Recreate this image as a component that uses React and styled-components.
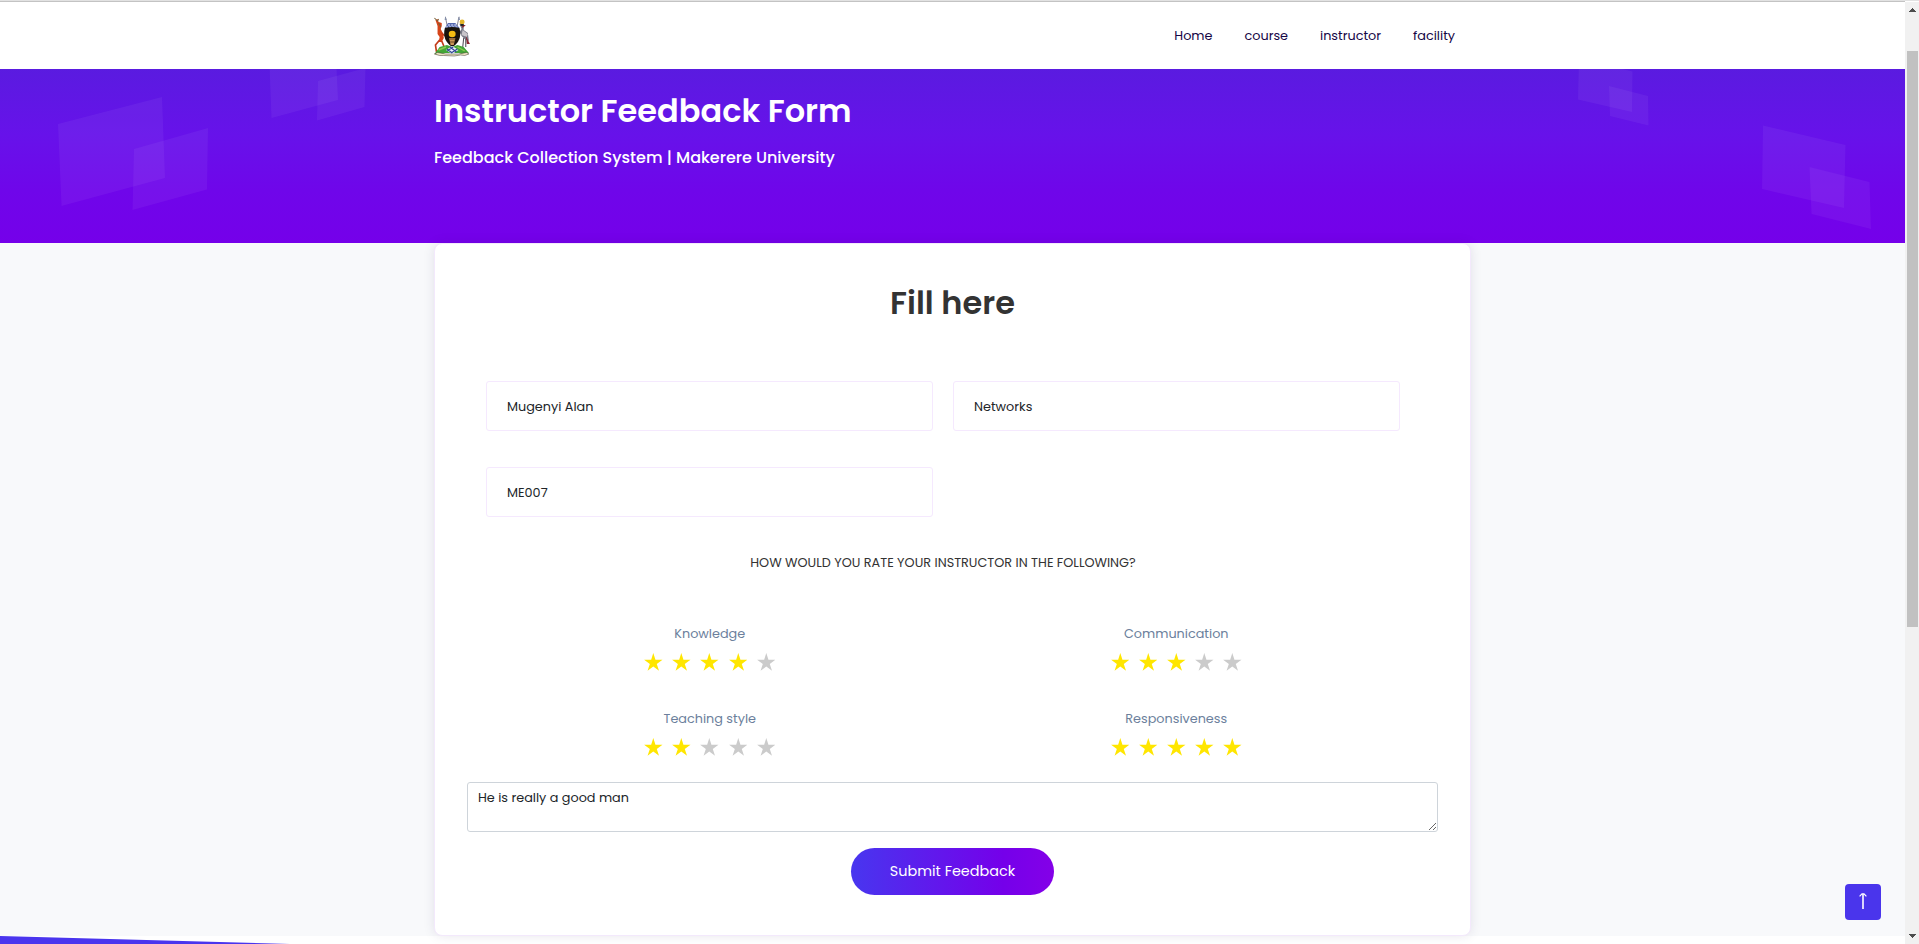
import React from 'react';
import styled, { createGlobalStyle } from 'styled-components';

const Global = createGlobalStyle`
  * { box-sizing: border-box; }
  body { margin: 0; overflow: hidden; background: #fff; font-family: Poppins, Inter, sans-serif; font-size: 12.8px; color: #212529; }
  h1, h2, p { margin: 0; }
`;

const Window = styled.div`display: flex; width: 1919px; height: 944px; overflow: hidden; border-top: 1px solid #e2e2e2;`;
const Page = styled.div`width: 1905px; border-top: 1px solid #c3c3c3; display: flex; flex-direction: column; background: #fff;`;
const Container = styled.div`width: 1037px; margin: 0 auto;`;

const Header = styled.header`height: 67px; background: #fff; flex: none;`;
const HeaderRow = styled(Container)`height: 67px; display: flex; justify-content: space-between; align-items: center; padding: 1px 16px 0 0;`;
const Nav = styled.nav`display: flex; gap: 32px;`;
const NavLink = styled.a`color: #160646; line-height: 20px;`;

const Hero = styled.section`height: 174px; flex: none; background: linear-gradient(#5a1be0, #6712ea 38%, #6f06ea 70%, #7500ea); display: grid;`;
const HeroShapes = styled.svg`grid-area: 1 / 1; display: block;`;
const HeroText = styled(Container)`grid-area: 1 / 1; color: #fff; padding-top: 22px;`;
const HeroTitle = styled.h1`font-size: 32px; font-weight: 600; line-height: 40px;`;
const HeroSub = styled.p`font-size: 16px; font-weight: 500; line-height: 24px; margin-top: 15px;`;

const Main = styled.main`height: 693px; flex: none; background: #f8f9fb;`;
const Card = styled(Container)`height: 693px; background: #fff; border: 1px solid #f3e9fc; border-radius: 8px; box-shadow: 0 0 12px rgba(40, 20, 80, .1); position: relative; display: flex; flex-direction: column; align-items: center;`;
const CardTitle = styled.h2`margin-top: 39px; font-size: 32px; line-height: 40px; font-weight: 600; color: #333;`;
const Fields = styled.div`margin: 58px 19px 0 0; width: 914px; display: grid; grid-template-columns: 447px 447px; gap: 36px 20px;`;
const Field = styled.input`height: 50px; border: 1px solid #f5e9fe; border-radius: 3px; padding: 2px 20px 0; font: 12.8px Poppins, Inter, sans-serif; color: #212529; background: #fff; outline: none;`;
const Question = styled.p`margin: 36px 19px 0 0; line-height: 20px; color: #333;`;
const Ratings = styled.div`margin: 51px 19px 0 0; width: 933px; display: grid; grid-template-columns: 1fr 1fr; row-gap: 37.4px;`;
const Rating = styled.div`display: flex; flex-direction: column; align-items: center; height: 48px;`;
const RatingLabel = styled.label`line-height: 20px; color: #6c7f9c;`;
const Stars = styled.div`display: flex; gap: 9.5px; margin-top: 8.8px;`;
const Star = styled.svg`width: 18.6px; height: 18.4px; display: block; fill: ${p => (p.$on ? '#ffe600' : '#cbcbcb')};`;
const Comment = styled.textarea`margin-top: 24.6px; width: 971px; height: 50px; flex: none; padding: 5px 10px; border: 1px solid #ced4da; border-radius: 3px; font: 12.8px/20px Poppins, Inter, sans-serif; color: #212529; outline: none; resize: vertical;`;
const Submit = styled.button`margin-top: 16px; width: 203px; height: 47px; border: 0; border-radius: 24px; color: #fff; font: 14.4px Poppins, Inter, sans-serif; background: linear-gradient(90deg, #4836ef, #7500ea 75%, #8400e8);`;

const Footer = styled.footer`height: 8px; flex: none;`;
const ToTop = styled.button`position: absolute; left: 1845px; top: 884px; width: 36px; height: 36px; border: 0; border-radius: 4px; background: #4a35ec; padding: 0; display: grid; place-items: center;`;

const ScrollTrack = styled.div`width: 14px; background: #f1f1f1; margin-top: 1px; display: flex; flex-direction: column; align-items: center; padding: 6px 0 6px;`;
const Thumb = styled.div`width: 11px; height: 576px; background: #c1c1c1; margin-top: 39px;`;
const Arrow = styled.svg`display: block; width: 7px; height: 4px; fill: #4d4d4d; shape-rendering: crispEdges; margin-left: 1px; margin-top: ${p => (p.$end ? 'auto' : 0)};`;

const Crest = () => (
  <svg width="37" height="41" viewBox="0.6 0 35.4 41" preserveAspectRatio="none">
    <path d="M11.5 1 L17 29 M24.5 1 L19 29" stroke="#8b8792" strokeWidth="1" />
    <path d="M10.8 4 L11.3 0 L12.9 4 Z M23.3 4 L24.6 0 L25.5 4 Z" fill="#8590aa" />
    <path d="M2 4 L4 3 L5 6 L8 7 L8 10 L7 13 L9 17 L10 22 L8 26 L5 26 L6 21 L4 18 L4 10 Z" fill="#d64419" />
    <path d="M8 17 L11 20 M6 24 L2 29 L3 36 M8 25 L10 30" stroke="#c23c1a" strokeWidth="1.6" fill="none" />
    <path d="M1 2 L4 5 L5 3 M5 7 L7 11" stroke="#76613a" fill="none" />
    <path d="M25 8 L27 6 L29 8 L29 14 L33 17 L34 25 L30 23 L27 20 L25 16 L27 13 Z" fill="#777a87" />
    <path d="M28 14 L33 18 L32 21 L27 19 Z" fill="#c9c6cb" />
    <path d="M31 20 L35 28 L32 28 Z M27 9 L31 9 L28 12 Z" fill="#8e2430" />
    <circle cx="27.5" cy="6" r="2.4" fill="#e2b426" />
    <path d="M26 8 L29 8 L29 10 L26 10 Z" fill="#252525" />
    <path d="M29 22 L28 32 M31 23 L31 31" stroke="#4f4c54" />
    <path d="M11 12 L14 7 L21 7 L25 12 Z" fill="#5568af" />
    <path d="M14 9 H22 M12 11 H24" stroke="#e5eaff" strokeWidth="1" strokeDasharray="2 1" />
    <path d="M11 12 Q18 10 25 12 Q28 25 18 31 Q8 24 11 12 Z" fill="#18130d" />
    <circle cx="18" cy="18" r="3.3" fill="#f5bd13" />
    <path d="M15 22 H21 L19.5 29 H16.5 Z" fill="#cb9657" />
    <path d="M15 23 L21 23 M16 26 L20 26" stroke="#6c4826" />
    <path d="M1 38 L6 31 L13 29 L18 31 L23 29 L29 31 L34 37 L30 39 L25 37 L11 37 L6 39 Z" fill="#43a636" />
    <path d="M5 34 L12 31 M23 31 L30 35" stroke="#8cc950" strokeWidth="1.4" />
    <path d="M12 34 L18 30 L24 34 L18 38 Z" fill="#f0f3ff" />
    <path d="M13 33 L18 37 M16 31 L22 36 M23 33 L17 37 M19 31 L13 35" stroke="#314795" strokeWidth="1.2" fill="none" />
    <path d="M1 38 L4 36.5 L12 38 L24 38 L32 36.5 L34 38 L30 39.5 L26 39 L20 40 L10 39.5 L6 39.5 Z" fill="#eee5c2" stroke="#40372e" strokeWidth=".5" />
  </svg>
);

const shapes = [
  '58,55 162,28 165,109 61.5,137', '134,80 208,59 207,120.5 132.5,141',
  '269.5,-4 336,-12 338,31 271.5,49', '318,12 365.5,-1 364.5,38 317,51.5',
  '1579,-11 1632.5,2.5 1632,43 1578,30.5', '1609,17 1648,27 1648.5,56.5 1610,47',
  '1763,56.5 1845.5,76 1844,139 1762,120', '1809.5,98 1869.5,113 1871,160 1811.5,145',
];

const links = ['Home', 'course', 'instructor', 'facility'];
const fields = ['Mugenyi Alan', 'Networks', 'ME007'];
const ratings = [['Knowledge', 4], ['Communication', 3], ['Teaching style', 2], ['Responsiveness', 5]];

export default function App() {
  return (
    <>
      <Global />
      <Window>
        <Page>
          <Header>
            <HeaderRow>
              <Crest />
              <Nav>{links.map(t => <NavLink key={t}>{t}</NavLink>)}</Nav>
            </HeaderRow>
          </Header>
          <Hero>
            <HeroShapes width="1905" height="174">
              {shapes.map(s => <polygon key={s} points={s} fill="#fff" fillOpacity=".05" />)}
            </HeroShapes>
            <HeroText>
              <HeroTitle>Instructor Feedback Form</HeroTitle>
              <HeroSub>Feedback Collection System | Makerere University</HeroSub>
            </HeroText>
          </Hero>
          <Main>
            <Card>
              <CardTitle>Fill here</CardTitle>
              <Fields>{fields.map(t => <Field key={t} defaultValue={t} />)}</Fields>
              <Question>HOW WOULD YOU RATE YOUR INSTRUCTOR IN THE FOLLOWING?</Question>
              <Ratings>
                {ratings.map(([t, n]) => (
                  <Rating key={t}>
                    <RatingLabel>{t}</RatingLabel>
                    <Stars>
                      {[1, 2, 3, 4, 5].map(i => (
                        <Star key={i} $on={i <= n} viewBox="0 0 18 18">
                          <path d="M9 0 L11.1 6.6 H18 L12.4 10.7 L14.6 17.3 L9 13.3 L3.4 17.3 L5.6 10.7 L0 6.6 H6.9 Z" />
                        </Star>
                      ))}
                    </Stars>
                  </Rating>
                ))}
              </Ratings>
              <Comment defaultValue="He is really a good man" />
              <Submit>Submit Feedback</Submit>
            </Card>
          </Main>
          <Footer>
            <svg width="1905" height="8" display="block"><polygon points="0,0 290,8 0,8" fill="#4a35ee" /></svg>
          </Footer>
        </Page>
        <ScrollTrack>
          <Arrow viewBox="0 0 7 4"><path d="M3 0h1v1h1v1h1v1h1v1H0V3h1V2h1V1h1z" /></Arrow>
          <Thumb />
          <Arrow $end viewBox="0 0 7 4"><path d="M0 0h7v1H6v1H5v1H4v1H3V3H2V2H1V1H0z" /></Arrow>
        </ScrollTrack>
      </Window>
      <ToTop aria-label="Back to top">
        <svg width="36" height="36" viewBox="0 0 36 36" fill="none" stroke="#fff">
          <path d="M18 25 V10" strokeWidth="1.6" /><path d="M14.6 12.4 L17 9.8 H19 L21.4 12.4" strokeWidth="1.2" />
        </svg>
      </ToTop>
    </>
  );
}
